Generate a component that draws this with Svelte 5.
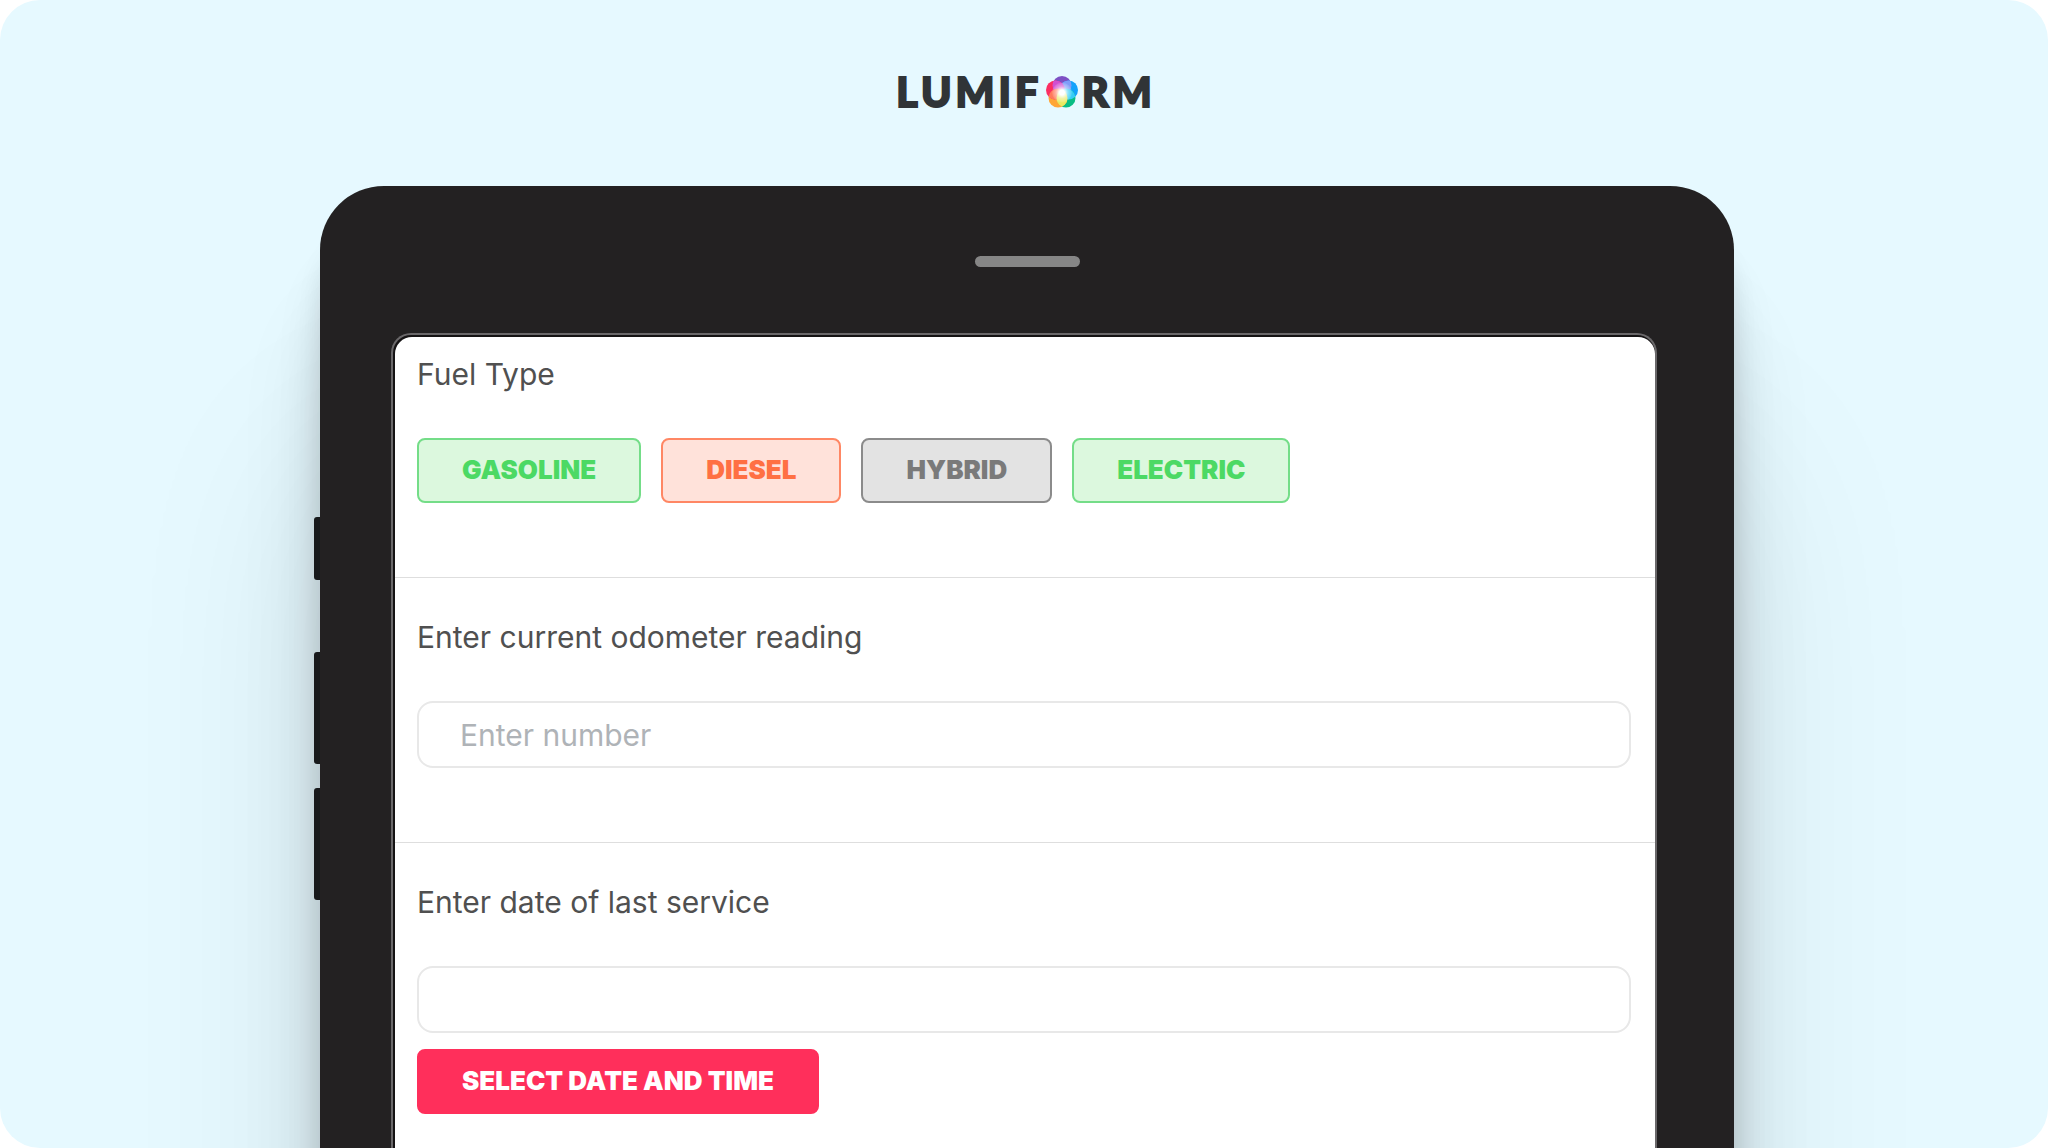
<script lang="ts">
  interface FuelOption {
    label: string;
    tone: 'good' | 'warn' | 'neutral';
  }

  const fuelOptions: FuelOption[] = [
    { label: 'GASOLINE', tone: 'good' },
    { label: 'DIESEL', tone: 'warn' },
    { label: 'HYBRID', tone: 'neutral' },
    { label: 'ELECTRIC', tone: 'good' }
  ];

  let fuel = $state('');
  let odometer = $state('');
  let serviceDate = $state('');

  function selectDate() {
    serviceDate = new Date().toLocaleString('en-US');
  }
</script>

<div class="page">
  <header class="logo" aria-label="Lumiform">
    <span>LUMIF</span>
    <svg width="32" height="34" viewBox="0 0 32 34" aria-hidden="true">
      <g>
        <circle cx="16" cy="10.5" r="9.5" fill="#7d50c4" />
        <circle cx="22.5" cy="15" r="9.5" fill="#12a2fb" />
        <circle cx="20" cy="23" r="9.5" fill="#07bd84" />
        <circle cx="12" cy="23" r="9.5" fill="#ffa636" />
        <circle cx="9.5" cy="15" r="9.5" fill="#fb2e62" />
      </g>
      <g clip-path="url(#top)">
        <circle cx="22.5" cy="15" r="9.5" fill="#7f9cf8" />
        <circle cx="9.5" cy="15" r="9.5" fill="#d14fd0" />
      </g>
      <g clip-path="url(#right)">
        <circle cx="20" cy="23" r="9.5" fill="#35cdf6" />
      </g>
      <g clip-path="url(#left)">
        <circle cx="12" cy="23" r="9.5" fill="#ff7a5c" />
      </g>
      <g clip-path="url(#bottom)">
        <circle cx="20" cy="23" r="9.5" fill="#e6ea62" />
      </g>
      <circle cx="16" cy="17.5" r="10" fill="url(#glow)" />
      <defs>
        <clipPath id="top"><circle cx="16" cy="10.5" r="9.5" /></clipPath>
        <clipPath id="right"><circle cx="22.5" cy="15" r="9.5" /></clipPath>
        <clipPath id="left"><circle cx="9.5" cy="15" r="9.5" /></clipPath>
        <clipPath id="bottom"><circle cx="12" cy="23" r="9.5" /></clipPath>
        <radialGradient id="glow">
          <stop offset="0.25" stop-color="#fff" />
          <stop offset="0.6" stop-color="#fff" stop-opacity="0.45" />
          <stop offset="1" stop-color="#fff" stop-opacity="0.1" />
        </radialGradient>
      </defs>
    </svg>
    <span>RM</span>
  </header>

  <div class="device">
    <div class="side-keys">
      <i class="key short"></i>
      <i class="key"></i>
      <i class="key"></i>
    </div>

    <div class="tablet">
      <div class="speaker"></div>
      <div class="screen">
        <form class="form" onsubmit={(e) => e.preventDefault()}>
          <section class="question first">
            <h2 class="label" id="fuel-label">Fuel Type</h2>
            <div class="options" role="group" aria-labelledby="fuel-label">
              {#each fuelOptions as option}
                <button
                  type="button"
                  class="btn {option.tone}"
                  aria-pressed={fuel === option.label}
                  onclick={() => fuel = option.label}
                >
                  {option.label}
                </button>
              {/each}
            </div>
          </section>

          <section class="question">
            <label class="label" for="odometer">Enter current odometer reading</label>
            <input id="odometer" class="field" inputmode="numeric" placeholder="Enter number" bind:value={odometer} />
          </section>

          <section class="question">
            <label class="label" for="service-date">Enter date of last service</label>
            <input id="service-date" class="field" type="text" bind:value={serviceDate} />
            <button type="button" class="btn primary" onclick={selectDate}>SELECT DATE AND TIME</button>
          </section>
        </form>
      </div>
    </div>
  </div>
</div>

<style>
  :global(body) {
    margin: 0;
    background: #fff;
  }

  .page {
    display: flex;
    flex-direction: column;
    box-sizing: border-box;
    height: 100vh;
    padding: 68px 314px 0;
    border-radius: 40px;
    overflow: hidden;
    background: #e6f9ff;
    font-family: Inter, 'Liberation Sans', sans-serif;
  }

  .logo {
    display: flex;
    align-items: center;
    justify-content: center;
    gap: 4px;
    height: 48px;
    margin-bottom: 70px;
    padding-left: 4px;
    color: #303437;
    font-family: Lato, sans-serif;
    font-size: 41px;
    font-weight: 900;
    line-height: 48px;
    letter-spacing: 4px;
    -webkit-text-stroke: 2px #303437;
    stroke-linejoin: round;
  }

  .device {
    display: grid;
    grid-template-columns: 6px 1fr;
    flex: 1;
  }

  .side-keys {
    display: flex;
    flex-direction: column;
    gap: 24px;
    padding-top: 331px;
  }

  .key {
    flex: none;
    height: 112px;
    border-radius: 3px 0 0 3px;
    background: #1e2022;
  }

  .key.short {
    height: 63px;
    margin-bottom: 48px;
  }

  .tablet {
    display: flex;
    flex-direction: column;
    padding-top: 70px;
    border-radius: 64px 64px 0 0;
    background: #232122;
    box-shadow:
      0 45px 25px rgba(0, 0, 0, 0.08),
      0 75px 45px rgba(0, 0, 0, 0.1),
      0 130px 84px rgba(0, 0, 0, 0.1),
      0 270px 200px rgba(0, 0, 0, 0.1);
  }

  .speaker {
    align-self: center;
    width: 105px;
    height: 11px;
    margin-bottom: 66px;
    border-radius: 6px;
    background: #868686;
  }

  .screen {
    flex: 1;
    margin: 0 77px 0 71px;
    padding: 2px 0 0 2px;
    border: 2px solid #6a686a;
    border-bottom: 0;
    border-radius: 20px 20px 0 0;
    background: #151314;
  }

  .form {
    height: 100%;
    border-radius: 17px 17px 0 0;
    background: #fff;
  }

  .question {
    display: flex;
    flex-direction: column;
    align-items: flex-start;
    padding: 43px 24px 74px 22px;
    border-bottom: 1px solid #dedede;
  }

  .question.first {
    padding-top: 21px;
  }

  .question:last-child {
    border-bottom: 0;
  }

  .label {
    margin: 0 0 47px;
    color: #505050;
    font-size: 30px;
    font-weight: 400;
    line-height: 33px;
  }

  .options {
    display: flex;
    gap: 20px;
  }

  .btn {
    box-sizing: border-box;
    height: 65px;
    padding: 0 43px 2px;
    border: 2px solid transparent;
    border-radius: 8px;
    font-family: Inter, sans-serif;
    font-size: 26px;
    font-weight: 900;
    cursor: pointer;
  }

  .good {
    border-color: #74dd88;
    background: #dcf8de;
    color: #4cd964;
  }

  .warn {
    border-color: #ff8764;
    background: #ffe2da;
    color: #ff7043;
  }

  .neutral {
    border-color: #8b8b8b;
    background: #e3e3e3;
    color: #7a7a7a;
  }

  .field {
    box-sizing: border-box;
    width: 100%;
    height: 67px;
    padding: 0 41px;
    border: 2px solid #e8e8e8;
    border-radius: 16px;
    outline: 0;
    background: #fff;
    color: #505050;
    font-family: inherit;
    font-size: 30px;
  }

  .field::placeholder {
    color: #afb3b7;
  }

  .primary {
    margin-top: 16px;
    border-color: #ff2f5b;
    background: #ff2f5b;
    color: #fff;
  }
</style>
